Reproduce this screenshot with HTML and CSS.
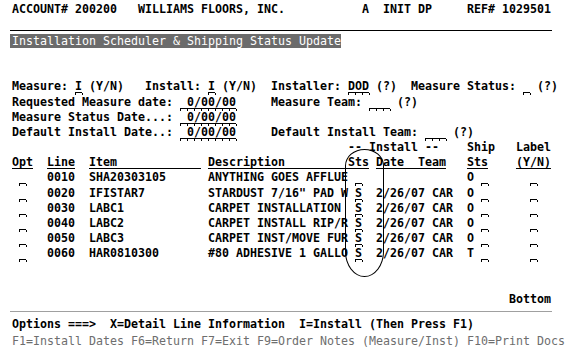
FILE: index.html
```html
<!DOCTYPE html>
<html lang="en">

<head>
    <meta charset="UTF-8">
    <meta name="viewport" content="width=device-width, initial-scale=1.0">
    <title>Installation Scheduler</title>
    <link rel="stylesheet" href="styles.css">
</head>

<body>
    <div class="screen">
        <div class="row">ACCOUNT# 200200   WILLIAMS FLOORS, INC.           A  INIT DP     REF# 1029501</div>
        <div class="rule"></div>
        <div class="row"><span class="title">Installation Scheduler &amp; Shipping Status Update</span></div>
        <div class="row"></div>
        <div class="row"></div>
        <div class="row">Measure: <span class="fld">I</span> (Y/N)   Install: <span class="fld">I</span> (Y/N)  Installer: <span class="fld">DOD</span> (?)  Measure Status: <span class="fld"> </span> (?)</div>
        <div class="row">Requested Measure date: <span class="fld"> 0/00/00</span>     Measure Team: <span class="fld">   </span> (?)</div>
        <div class="row">Measure Status Date...: <span class="fld"> 0/00/00</span></div>
        <div class="row">Default Install Date..: <span class="fld"> 0/00/00</span>     Default Install Team: <span class="fld">   </span> (?)</div>
        <div class="row">                                                -- Install --    Ship   Label</div>
        <div class="row"><u>Opt</u>  <u>Line</u>  <u>Item            </u> <u>Description         </u><u class="gap">Sts</u> <u>Date  Team</u>   <u>Sts</u>    <u>(Y/N)</u></div>

        <div class="row"> <span class="fld"> </span>   0010  SHA20303105      ANYTHING GOES AFFLUE <span class="fld"> </span>               O <span class="fld"> </span>      <span class="fld"> </span></div>
        <div class="row"> <span class="fld"> </span>   0020  IFISTAR7         STARDUST 7/16" PAD W <span class="fld">S</span>  2/26/07 CAR  O <span class="fld"> </span>      <span class="fld"> </span></div>
        <div class="row"> <span class="fld"> </span>   0030  LABC1            CARPET INSTALLATION  <span class="fld">S</span>  2/26/07 CAR  O <span class="fld"> </span>      <span class="fld"> </span></div>
        <div class="row"> <span class="fld"> </span>   0040  LABC2            CARPET INSTALL RIP/R <span class="fld">S</span>  2/26/07 CAR  O <span class="fld"> </span>      <span class="fld"> </span></div>
        <div class="row"> <span class="fld"> </span>   0050  LABC3            CARPET INST/MOVE FUR <span class="fld">S</span>  2/26/07 CAR  O <span class="fld"> </span>      <span class="fld"> </span></div>
        <div class="row"> <span class="fld"> </span>   0060  HAR0810300       #80 ADHESIVE 1 GALLO <span class="fld">S</span>  2/26/07 CAR  T <span class="fld"> </span>      <span class="fld"> </span></div>

        <div class="row"></div>
        <div class="row"></div>
        <div class="row">                                                                       Bottom</div>

        <div class="oval"></div>
    </div>

    <div class="footer">
        <div class="options">Options ===>  X=Detail Line Information  I=Install (Then Press F1)</div>
        <div class="fkeys">F1=Install Dates F6=Return F7=Exit F9=Order Notes (Measure/Inst) F10=Print Docs</div>
    </div>
</body>

</html>
```

FILE: styles.css
```css
body {
    margin: 0;
    background-color: #fff;
    color: #000;
    font-family: 'DejaVu Sans Mono', monospace;
    font-size: 11.63px;
}

.screen {
    position: relative;
    padding: 2.4px 0 0 12px;
}

.row {
    height: 15.2px;
    line-height: 15.2px;
    white-space: pre;
    font-weight: bold;
}

.rule {
    height: 12.6px;
    margin: 0 0 2.6px -2px;
    width: 542px;
    border-bottom: 1px solid #000;
}

.title {
    display: inline-block;
    line-height: 14px;
    margin-left: -2px;
    padding: 0 0 0 2px;
    background-color: #6b6b6b;
    color: #fff;
    font-weight: normal;
}

u {
    text-decoration: underline;
    text-decoration-thickness: 1px;
    text-underline-offset: 2px;
}

.gap {
    padding-left: 2px;
    margin-left: -2px;
}

.fld {
    position: relative;
    display: inline-block;
    line-height: 11px;
    border-bottom: 1px solid #000;
}

.fld::after {
    content: '';
    position: absolute;
    left: 0;
    right: -1px;
    top: calc(100% + 1px);
    height: 2px;
    background: repeating-linear-gradient(90deg, #000 0 1px, transparent 1px 7px);
}

.oval {
    position: absolute;
    left: 345px;
    top: 149px;
    width: 39px;
    height: 128px;
    box-sizing: border-box;
    border: 1px solid #000;
    border-radius: 50% 50% 50% 50% / 13% 13% 20% 20%;
}

.footer {
    width: 540px;
    margin: 4px 0 0 10px;
    padding: 4px 0 0 2px;
    border-top: 1px solid #a0a0a0;
}

.options {
    height: 17px;
    line-height: 17px;
    white-space: pre;
    font-weight: bold;
}

.fkeys {
    height: 17px;
    line-height: 17px;
    white-space: pre;
    color: #6e6e6e;
}
```
